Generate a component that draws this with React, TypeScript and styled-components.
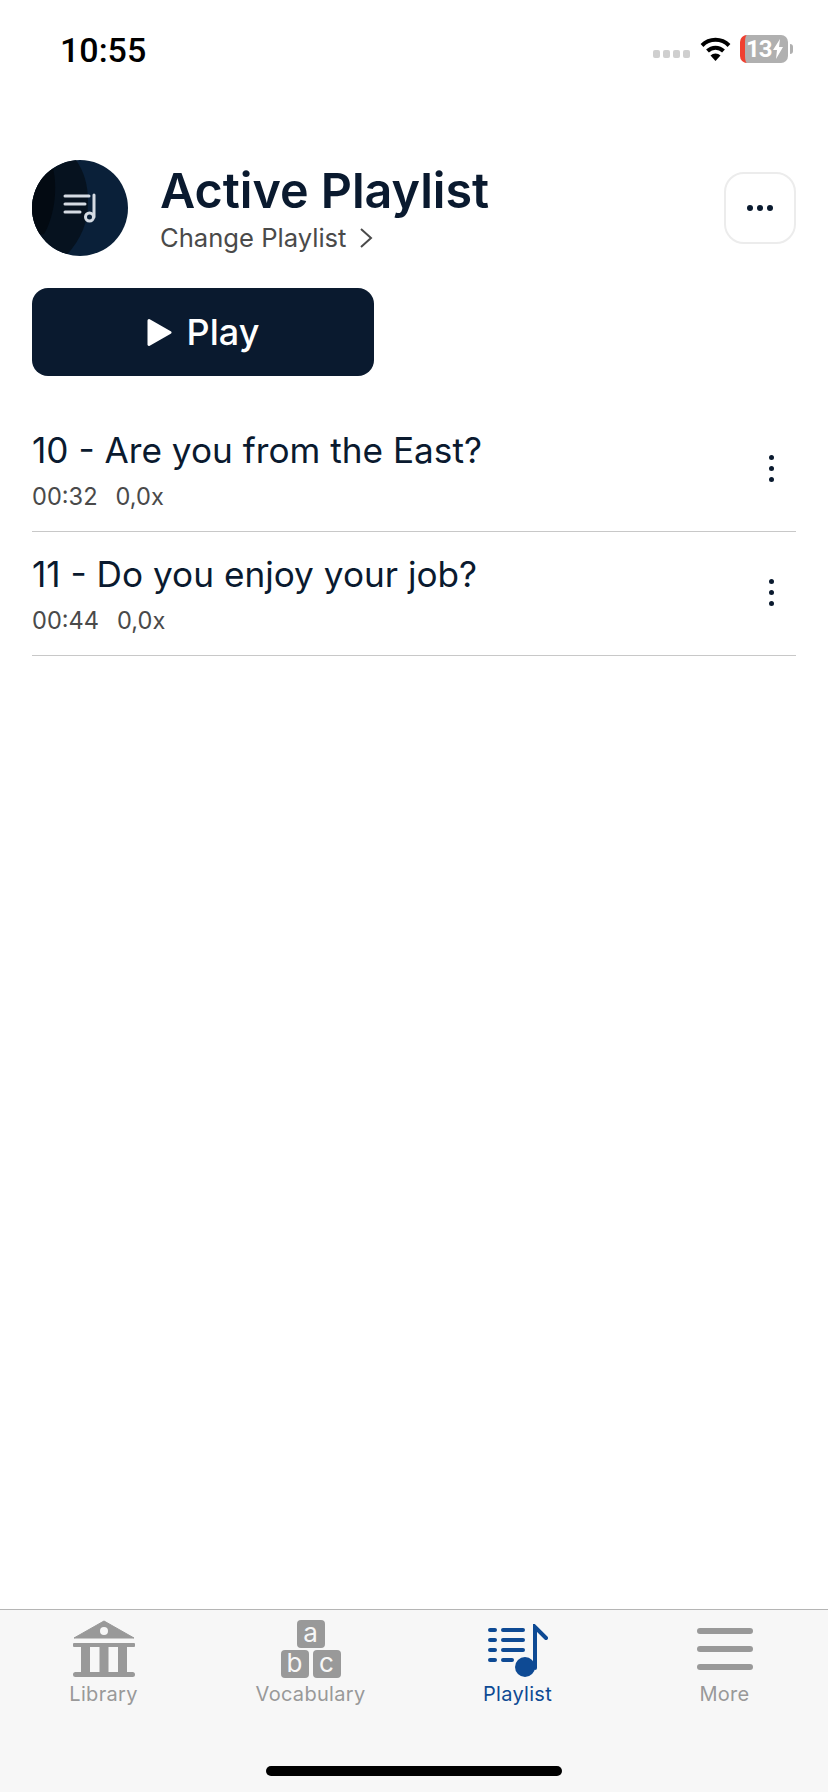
import { FunctionComponent } from 'react';
import styled, { createGlobalStyle } from 'styled-components';

const GlobalStyle = createGlobalStyle`
  html, body {
    margin: 0;
    padding: 0;
    background: #fff;
  }
  * {
    box-sizing: border-box;
  }
`;

const Screen = styled.div`
  width: 828px;
  height: 1792px;
  display: flex;
  flex-direction: column;
  background: #fff;
  font-family: Inter, 'Noto Sans', sans-serif;
  color: #0a1a2f;
  overflow: hidden;
`;

const StatusBar = styled.div`
  height: 100px;
  padding: 30px 35px 0 60px;
  display: flex;
  justify-content: space-between;
  align-items: flex-start;
  flex-shrink: 0;
`;

const Time = styled.span`
  font-family: Roboto, sans-serif;
  font-weight: 500;
  font-size: 34px;
  line-height: 40px;
  color: #000;
`;

const StatusIcons = styled.div`
  display: flex;
  align-items: center;
  height: 28px;
  margin-top: 5px;
`;

const SignalDots = styled.div`
  display: flex;
  gap: 3px;
  margin: 10px 10px 0 0;
`;

const SignalDot = styled.span`
  width: 7px;
  height: 8px;
  border-radius: 2px;
  background: #cfcfcf;
`;

const Battery = styled.div`
  width: 48px;
  height: 28px;
  margin-left: 9px;
  border-radius: 7px;
  border-left: 5px solid #f04030;
  background: #b0b0b0;
  color: #fff;
  font-family: Roboto, sans-serif;
  font-weight: 700;
  font-size: 24px;
  line-height: 28px;
  display: flex;
  align-items: center;
  padding-left: 1px;
  letter-spacing: -1px;
`;

const BatteryNub = styled.span`
  width: 3px;
  height: 10px;
  margin-left: 2px;
  border-radius: 0 3px 3px 0;
  background: #b0b0b0;
`;

const Content = styled.main`
  flex: 1;
  padding: 60px 32px 0;
`;

const Header = styled.div`
  display: flex;
  align-items: flex-start;
  gap: 32px;
`;

const Avatar = styled.svg`
  width: 96px;
  height: 96px;
  flex-shrink: 0;
`;

const HeaderText = styled.div`
  flex: 1;
  padding-top: 4px;
  display: flex;
  flex-direction: column;
`;

const Title = styled.h1`
  margin: 0;
  font-size: 48.4px;
  line-height: 54px;
  font-weight: 600;
  color: #0a1a2f;
`;

const ChangeLink = styled.div`
  display: flex;
  align-items: center;
  gap: 13px;
  margin-top: 5px;
  font-size: 25.6px;
  line-height: 30px;
  color: #4a4a4a;
`;

const MoreButton = styled.button`
  width: 72px;
  height: 72px;
  margin-top: 12px;
  padding: 0;
  background: #fff;
  border: 2px solid #ececec;
  border-radius: 20px;
  display: flex;
  justify-content: center;
  align-items: center;
  gap: 4px;
`;

const Dot = styled.span`
  width: 6px;
  height: 6px;
  border-radius: 50%;
  background: #0a1a2f;
`;

const PlayButton = styled.button`
  width: 342px;
  height: 88px;
  margin-top: 32px;
  border: 0;
  border-radius: 16px;
  background: #0a1a2f;
  color: #fff;
  font-family: inherit;
  font-size: 36px;
  font-weight: 500;
  display: flex;
  align-items: center;
  justify-content: center;
  gap: 15px;
`;

const TrackList = styled.div`
  margin-top: 32px;
  display: flex;
  flex-direction: column;
`;

const TrackRow = styled.div`
  height: 124px;
  padding-top: 19px;
  border-bottom: 1px solid #c8c8c8;
  display: flex;
  justify-content: space-between;
`;

const TrackInfo = styled.div`
  display: flex;
  flex-direction: column;
`;

const TrackTitle = styled.div`
  font-size: 35.2px;
  line-height: 46px;
  color: #0a1a2f;
`;

const TrackMeta = styled.div`
  display: flex;
  gap: 18px;
  margin-top: 9px;
  font-size: 23.6px;
  line-height: 30px;
  color: #4a4a4a;
`;

const TrackMenu = styled.div`
  width: 5px;
  margin: 28px 22px 0 0;
  display: flex;
  flex-direction: column;
  gap: 6px;
`;

const TrackDot = styled.span`
  width: 5px;
  height: 5px;
  border-radius: 50%;
  background: #0a1a2f;
`;

const TabBar = styled.nav`
  height: 183px;
  flex-shrink: 0;
  background: #f7f7f7;
  border-top: 1px solid #b5b5b5;
  display: flex;
  flex-direction: column;
`;

const Tabs = styled.div`
  display: grid;
  grid-template-columns: repeat(4, 1fr);
  height: 156px;
`;

const Tab = styled.div`
  height: 100%;
  display: flex;
  flex-direction: column;
  align-items: center;
`;

const TabIcon = styled.div`
  height: 68px;
  display: flex;
  align-items: flex-end;
`;

const TabLabel = styled.span<{ $active?: boolean }>`
  margin-top: 4px;
  font-size: 20px;
  line-height: 24px;
  letter-spacing: 0.3px;
  color: ${(p) => (p.$active ? '#0e4a94' : '#999')};
`;

const BlockStack = styled.div`
  display: flex;
  flex-direction: column;
  align-items: center;
  gap: 2px;
`;

const BlockRow = styled.div`
  display: flex;
  gap: 4px;
`;

const Block = styled.span`
  width: 28px;
  height: 28px;
  border-radius: 4px;
  background: #999;
  color: #f7f7f7;
  font-size: 26px;
  line-height: 26px;
  text-align: center;
`;

const MenuLines = styled.div`
  width: 56px;
  height: 42px;
  display: flex;
  flex-direction: column;
  justify-content: space-between;
  margin-bottom: 8px;
`;

const MenuLine = styled.span`
  height: 6px;
  border-radius: 3px;
  background: #999;
`;

const HomeBar = styled.div`
  width: 296px;
  height: 10px;
  margin: 0 auto;
  border-radius: 5px;
  background: #000;
`;

const tracks = [
  { title: '10 - Are you from the East?', time: '00:32', speed: '0,0x' },
  { title: '11 - Do you enjoy your job?', time: '00:44', speed: '0,0x' },
];

const App: FunctionComponent = () => {
  return (
    <Screen>
      <GlobalStyle />
      <StatusBar>
        <Time>10:55</Time>
        <StatusIcons>
          <SignalDots>
            <SignalDot />
            <SignalDot />
            <SignalDot />
            <SignalDot />
          </SignalDots>
          <svg width="31" height="24" viewBox="0 0 31 24">
            <path d="M2 8.5a19 19 0 0 1 27 0" fill="none" stroke="#000" strokeWidth="4" />
            <path d="M7.5 14a11.500 11.500 0 0 1 16 0" fill="none" stroke="#000" strokeWidth="4" />
            <path d="M10.500 18.500a7 7 0 0 1 10 0L15.500 24z" fill="#000" />
          </svg>
          <Battery>
            13
            <svg width="12" height="20" viewBox="0 0 12 20">
              <path d="M8 0L1 11h4l-1 9 7-12H7z" fill="#fff" />
            </svg>
          </Battery>
          <BatteryNub />
        </StatusIcons>
      </StatusBar>

      <Content>
        <Header>
          <Avatar viewBox="0 0 96 96">
            <defs>
              <clipPath id="avatarClip">
                <circle cx="48" cy="48" r="48" />
              </clipPath>
            </defs>
            <g clipPath="url(#avatarClip)">
              <rect width="96" height="96" fill="#0a2039" />
              <path d="M0 0h44c8 12 12 24 12 42 0 20-6 36-22 54H0z" fill="#06121f" />
              <path d="M0 0h18c6 12 6 30 4 44-2 12-6 24-10 30L0 76z" fill="#030a12" />
              <path d="M33 36h24M33 44h20M33 52h15" stroke="#d5dbe3" strokeWidth="3" strokeLinecap="round" />
              <path d="M62 35v22" stroke="#d5dbe3" strokeWidth="3" strokeLinecap="round" />
              <circle cx="57.500" cy="57" r="4" fill="none" stroke="#d5dbe3" strokeWidth="3" />
            </g>
          </Avatar>
          <HeaderText>
            <Title>Active Playlist</Title>
            <ChangeLink>
              Change Playlist
              <svg width="14" height="22" viewBox="0 0 14 22">
                <path d="M2 2l10 9-10 9" fill="none" stroke="#4a4a4a" strokeWidth="2" />
              </svg>
            </ChangeLink>
          </HeaderText>
          <MoreButton>
            <Dot />
            <Dot />
            <Dot />
          </MoreButton>
        </Header>

        <PlayButton>
          <svg width="25" height="29" viewBox="0 0 25 29">
            <path d="M2 2.500L23 14.500 2 26.500z" fill="#fff" stroke="#fff" strokeWidth="3" strokeLinejoin="round" />
          </svg>
          Play
        </PlayButton>

        <TrackList>
          {tracks.map((track) => (
            <TrackRow key={track.title}>
              <TrackInfo>
                <TrackTitle>{track.title}</TrackTitle>
                <TrackMeta>
                  <span>{track.time}</span>
                  <span>{track.speed}</span>
                </TrackMeta>
              </TrackInfo>
              <TrackMenu>
                <TrackDot />
                <TrackDot />
                <TrackDot />
              </TrackMenu>
            </TrackRow>
          ))}
        </TrackList>
      </Content>

      <TabBar>
        <Tabs>
          <Tab>
            <TabIcon>
              <svg width="62" height="58" viewBox="0 0 62 58">
                <path d="M31 1L61 18H1z" fill="#999" stroke="#999" strokeLinejoin="round" />
                <circle cx="31" cy="11" r="4" fill="#f7f7f7" />
                <rect y="23" width="62" height="4" rx="1" fill="#999" />
                <rect x="8" y="27" width="9" height="26" fill="#999" />
                <rect x="26.500" y="27" width="9" height="26" fill="#999" />
                <rect x="45" y="27" width="9" height="26" fill="#999" />
                <rect y="52" width="62" height="5" rx="2.500" fill="#999" />
              </svg>
            </TabIcon>
            <TabLabel>Library</TabLabel>
          </Tab>
          <Tab>
            <TabIcon>
              <BlockStack>
                <Block>a</Block>
                <BlockRow>
                  <Block>b</Block>
                  <Block>c</Block>
                </BlockRow>
              </BlockStack>
            </TabIcon>
            <TabLabel>Vocabulary</TabLabel>
          </Tab>
          <Tab>
            <TabIcon>
              <svg width="60" height="54" viewBox="0 0 60 54">
                <g stroke="#0e4a94" strokeWidth="4" strokeLinecap="round">
                  <path d="M2 6h5M15 6h20M2 16h5M15 16h20M2 26h5M15 26h20M2 36h5M15 36h9" />
                  <path d="M47 44V3l11 11" fill="none" />
                </g>
                <circle cx="37" cy="43" r="10" fill="#0e4a94" />
              </svg>
            </TabIcon>
            <TabLabel $active>Playlist</TabLabel>
          </Tab>
          <Tab>
            <TabIcon>
              <MenuLines>
                <MenuLine />
                <MenuLine />
                <MenuLine />
              </MenuLines>
            </TabIcon>
            <TabLabel>More</TabLabel>
          </Tab>
        </Tabs>
        <HomeBar />
      </TabBar>
    </Screen>
  );
};

export default App;
